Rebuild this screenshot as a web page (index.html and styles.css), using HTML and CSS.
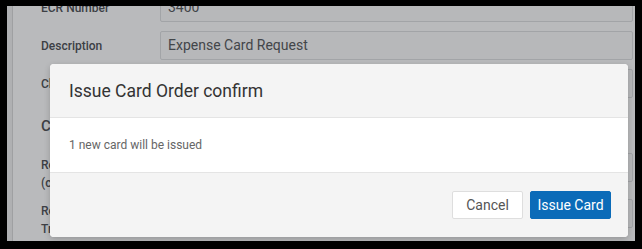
FILE: index.html
```
<!DOCTYPE html>
<html lang="en">
<head>
<meta charset="utf-8">
<title>Issue Card Order confirm</title>
<link rel="stylesheet" href="styles.css">
</head>
<body>
<div class="screen">
  <div class="sidebar"></div>
  <div class="page">
    <div class="form">
      <div class="row">
        <label class="label">ECR Number</label>
        <div class="input">3400</div>
      </div>
      <div class="row">
        <label class="label">Description</label>
        <div class="input">Expense Card Request</div>
      </div>
      <div class="row">
        <label class="label">Classification</label>
        <div class="input">Standard</div>
      </div>
      <h2 class="section">Card Limits</h2>
      <div class="row row-top">
        <label class="label">Requested Amount (currency)</label>
        <div class="input">5000</div>
      </div>
      <div class="row row-top">
        <label class="label">Requested Transaction Limit</label>
        <div class="input">1000</div>
      </div>
    </div>
  </div>
  <div class="overlay"></div>
  <div class="modal" role="dialog">
    <div class="modal-header">
      <h1 class="modal-title">Issue Card Order confirm</h1>
    </div>
    <div class="modal-body">1 new card will be issued</div>
    <div class="modal-footer">
      <button class="btn btn-default">Cancel</button>
      <button class="btn btn-primary">Issue Card</button>
    </div>
  </div>
</div>
</body>
</html>
```
FILE: styles.css
```
html, body {
  margin: 0;
  padding: 0;
  background: #000;
}

body {
  font-family: Roboto, "Liberation Sans", Arial, sans-serif;
}

.screen {
  position: relative;
  margin: 6px 0 0 7px;
  width: 628px;
  height: 235px;
  overflow: hidden;
  background: #fff;
  display: flex;
}

.sidebar {
  width: 5px;
  flex: none;
  background: #f2f2f2;
  border-right: 1px solid #dcdcdc;
}

.page {
  flex: 1;
  padding-left: 28px;
}

.form {
  margin-top: -13px;
  display: flex;
  flex-direction: column;
}

.row {
  display: flex;
  align-items: center;
  margin-bottom: 9px;
}

.row-top {
  align-items: flex-start;
  margin-bottom: 7px;
}

.label {
  width: 119px;
  flex: none;
  font-size: 12px;
  font-weight: 500;
  color: #54575b;
  line-height: 18px;
}

.row-top .label {
  padding-top: 3px;
}

.input {
  flex: 1;
  height: 27px;
  margin-right: 2px;
  border: 1px solid #e0e1e3;
  border-radius: 2px;
  background: #fcfcfc;
  padding: 0 7px;
  font-size: 14px;
  line-height: 27px;
  color: #5c5f63;
}

.section {
  margin: 10px 0 18px;
  font-size: 15px;
  font-weight: 500;
  color: #54575b;
  line-height: 18px;
}

.overlay {
  position: absolute;
  inset: 0;
  background: rgba(0, 4, 12, 0.275);
}

.modal {
  position: absolute;
  left: 43px;
  top: 58px;
  width: 578px;
  border-radius: 4px;
  overflow: hidden;
  background: #fff;
  box-shadow: 0 2px 6px rgba(0, 0, 0, 0.2);
}

.modal-header {
  height: 53px;
  display: flex;
  align-items: center;
  padding: 0 19px;
  background: #f4f4f4;
  border-bottom: 1px solid #e4e4e4;
}

.modal-title {
  margin: 0;
  font-size: 17.5px;
  font-weight: 400;
  color: #333;
}

.modal-body {
  height: 54px;
  display: flex;
  align-items: center;
  padding: 0 19px;
  font-size: 12px;
  color: #666;
  background: #fff;
}

.modal-footer {
  display: flex;
  justify-content: flex-end;
  gap: 7px;
  padding: 18px 17px 18px;
  background: #f4f4f4;
  border-top: 1px solid #e4e4e4;
}

.btn {
  height: 28px;
  border-radius: 2px;
  font-family: Roboto, "Liberation Sans", Arial, sans-serif;
  font-size: 14px;
  padding: 0;
  white-space: nowrap;
  cursor: pointer;
}

.btn-default {
  background: #fff;
  border: 1px solid #dedede;
  color: #555;
  width: 71px;
}

.btn-primary {
  background: #0b6bb8;
  border: 1px solid #0b6bb8;
  color: #fff;
  width: 81px;
}
```
